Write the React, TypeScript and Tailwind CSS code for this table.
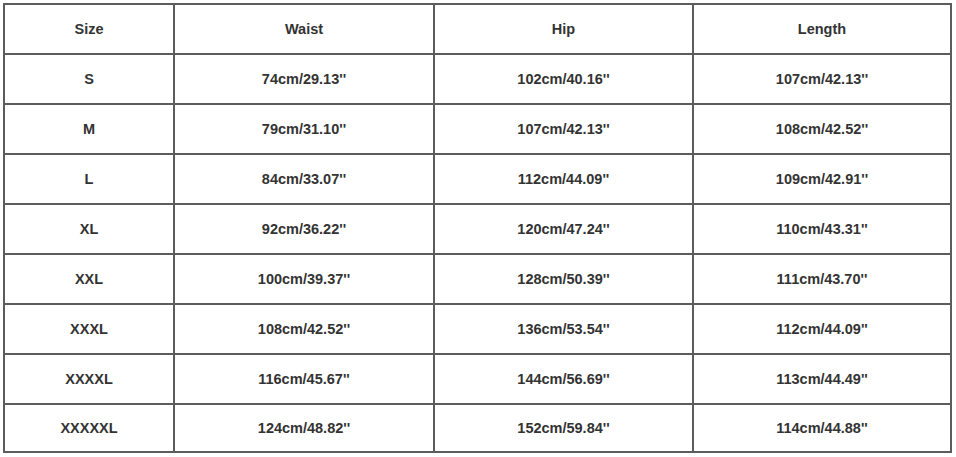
import React from "react";

const header = ["Size", "Waist", "Hip", "Length"];
const rows: string[][] = [
  ["S", "74cm/29.13''", "102cm/40.16''", "107cm/42.13''"],
  ["M", "79cm/31.10''", "107cm/42.13''", "108cm/42.52''"],
  ["L", "84cm/33.07''", "112cm/44.09''", "109cm/42.91''"],
  ["XL", "92cm/36.22''", "120cm/47.24''", "110cm/43.31''"],
  ["XXL", "100cm/39.37''", "128cm/50.39''", "111cm/43.70''"],
  ["XXXL", "108cm/42.52''", "136cm/53.54''", "112cm/44.09''"],
  ["XXXXL", "116cm/45.67''", "144cm/56.69''", "113cm/44.49''"],
  ["XXXXXL", "124cm/48.82''", "152cm/59.84''", "114cm/44.88''"],
];

export default function App() {
  const all = [header, ...rows];
  return (
    <div className="w-[956px] h-[457px] bg-white pt-[3px] pl-[3px]" style={{ fontFamily: '"Liberation Sans", Arial, sans-serif' }}>
      <div className="grid w-[949px] grid-cols-[168px_258px_257px_256px] grid-rows-[48px_48px_48px_48px_48px_48px_48px_48px_46px] gap-[2px] border-2 border-[#5c5c5c] bg-[#5c5c5c]">
        {all.map((r, i) =>
          r.map((c, j) => (
            <div
              key={`${i}-${j}`}
              className="flex items-center justify-center bg-white pt-[2px] text-[14.5px] font-bold text-[#333333]"
            >
              {c}
            </div>
          ))
        )}
      </div>
    </div>
  );
}
